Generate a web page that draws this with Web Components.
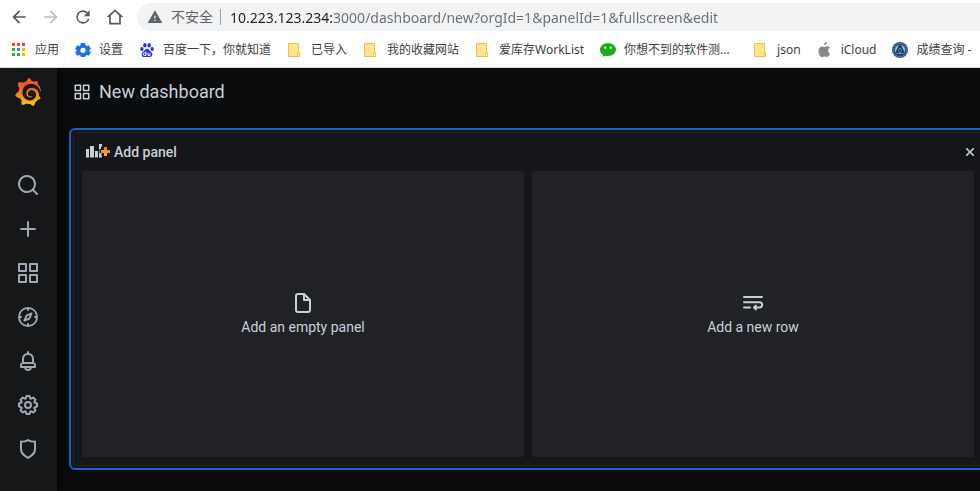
<!DOCTYPE html>
<html lang="zh-CN">
<head>
<meta charset="utf-8">
<title>New dashboard - Grafana</title>
<style>
html, body { height: 100%; }
body { margin: 0; overflow: hidden; background: #0b0c0e; }
</style>
</head>
<body>
<app-window></app-window>
<script>
const define = (name, html, setup) => {
  const template = document.createElement('template');
  template.innerHTML = html;
  customElements.define(name, class extends HTMLElement {
    constructor() {
      super();
      this.attachShadow({ mode: 'open' }).append(template.content.cloneNode(true));
    }
    connectedCallback() { if (setup) setup(this, this.shadowRoot); }
  });
};

/* Line icons on a 24-unit grid */
const icons = {
  search: 'M21.71,20.29,18,16.61A9,9,0,1,0,16.61,18l3.68,3.68a1,1,0,0,0,1.42,0A1,1,0,0,0,21.71,20.29ZM11,18a7,7,0,1,1,7-7A7,7,0,0,1,11,18Z',
  plus: 'M19,11H13V5a1,1,0,0,0-2,0v6H5a1,1,0,0,0,0,2h6v6a1,1,0,0,0,2,0V13h6a1,1,0,0,0,0-2Z',
  apps: 'M10,13H3a1,1,0,0,0-1,1v7a1,1,0,0,0,1,1h7a1,1,0,0,0,1-1V14A1,1,0,0,0,10,13ZM9,20H4V15H9ZM21,2H14a1,1,0,0,0-1,1v7a1,1,0,0,0,1,1h7a1,1,0,0,0,1-1V3A1,1,0,0,0,21,2ZM20,9H15V4h5Zm1,4H14a1,1,0,0,0-1,1v7a1,1,0,0,0,1,1h7a1,1,0,0,0,1-1V14A1,1,0,0,0,21,13Zm-1,7H15V15h5ZM10,2H3A1,1,0,0,0,2,3v7a1,1,0,0,0,1,1h7a1,1,0,0,0,1-1V3A1,1,0,0,0,10,2ZM9,9H4V4H9Z',
  compass: 'M12,2A10,10,0,1,0,22,12,10,10,0,0,0,12,2Zm1,17.93V19a1,1,0,0,0-2,0v.93A8,8,0,0,1,4.07,13H5a1,1,0,0,0,0-2H4.07A8,8,0,0,1,11,4.07V5a1,1,0,0,0,2,0V4.07A8,8,0,0,1,19.93,11H19a1,1,0,0,0,0,2h.93A8,8,0,0,1,13,19.93ZM15.14,7.55l-5,2.12a1,1,0,0,0-.52.52l-2.12,5a1,1,0,0,0,.21,1.1,1,1,0,0,0,.7.3.93.93,0,0,0,.4-.09l5-2.12a1,1,0,0,0,.52-.52l2.12-5a1,1,0,0,0-1.31-1.31Zm-2.49,5.1-2.28,1,1-2.28,2.28-1Z',
  bell: 'M18,13.18V10a6,6,0,0,0-5-5.91V3a1,1,0,0,0-2,0V4.09A6,6,0,0,0,6,10v3.18A3,3,0,0,0,4,16v2a1,1,0,0,0,1,1H8.14a4,4,0,0,0,7.72,0H19a1,1,0,0,0,1-1V16A3,3,0,0,0,18,13.18ZM8,10a4,4,0,0,1,8,0v3H8Zm4,10a2,2,0,0,1-1.72-1h3.44A2,2,0,0,1,12,20Zm6-3H6V16a1,1,0,0,1,1-1H17a1,1,0,0,1,1,1Z',
  cog: 'M21.32,9.55l-1.89-.63.89-1.78A1,1,0,0,0,20.13,6L18,3.87a1,1,0,0,0-1.15-.19l-1.78.89-.63-1.89A1,1,0,0,0,13.5,2h-3a1,1,0,0,0-.95.68L8.92,4.57,7.14,3.68A1,1,0,0,0,6,3.87L3.87,6a1,1,0,0,0-.19,1.15l.89,1.78-1.89.63A1,1,0,0,0,2,10.5v3a1,1,0,0,0,.68.95l1.89.63-.89,1.78A1,1,0,0,0,3.87,18L6,20.13a1,1,0,0,0,1.15.19l1.78-.89.63,1.89a1,1,0,0,0,.95.68h3a1,1,0,0,0,.95-.68l.63-1.89,1.78.89A1,1,0,0,0,18,20.13L20.13,18a1,1,0,0,0,.19-1.15l-.89-1.78,1.89-.63A1,1,0,0,0,22,13.5v-3A1,1,0,0,0,21.32,9.55ZM20,12.78l-1.2.4A2,2,0,0,0,17.64,16l.57,1.14-1.1,1.1L16,17.64a2,2,0,0,0-2.79,1.16l-.4,1.2H11.22l-.4-1.2A2,2,0,0,0,8,17.64l-1.14.57-1.1-1.1L6.36,16A2,2,0,0,0,5.2,13.18L4,12.78V11.22l1.2-.4A2,2,0,0,0,6.36,8L5.79,6.89l1.1-1.1L8,6.36A2,2,0,0,0,10.82,5.2l.4-1.2h1.56l.4,1.2A2,2,0,0,0,16,6.36l1.14-.57,1.1,1.1L17.64,8a2,2,0,0,0,1.16,2.79l1.2.4ZM12,8a4,4,0,1,0,4,4A4,4,0,0,0,12,8Zm0,6a2,2,0,1,1,2-2A2,2,0,0,1,12,14Z',
  shield: 'M19.63,3.65a1,1,0,0,0-.84-.2,8,8,0,0,1-6.22-1.27,1,1,0,0,0-1.14,0A8,8,0,0,1,5.21,3.45a1,1,0,0,0-.84.2A1,1,0,0,0,4,4.43v7.45a9,9,0,0,0,3.77,7.33l3.65,2.6a1,1,0,0,0,1.16,0l3.65-2.6A9,9,0,0,0,20,11.88V4.43A1,1,0,0,0,19.63,3.65ZM18,11.88a7,7,0,0,1-2.93,5.7L12,19.77,8.93,17.58A7,7,0,0,1,6,11.88V5.58a10,10,0,0,0,6-1.39,10,10,0,0,0,6,1.39Z',
  file: 'M20,8.94a1.31,1.31,0,0,0-.06-.27l0-.09a1.07,1.07,0,0,0-.19-.28h0l-6-6h0a1.07,1.07,0,0,0-.28-.19l-.1,0A1.1,1.1,0,0,0,13.06,2H7A3,3,0,0,0,4,5V19a3,3,0,0,0,3,3H17a3,3,0,0,0,3-3V9S20,9,20,8.94ZM14,5.41,16.59,8H14ZM18,19a1,1,0,0,1-1,1H7a1,1,0,0,1-1-1V5A1,1,0,0,1,7,4h5V9a1,1,0,0,0,1,1h5Z',
  wrap: 'M3,7H21a1,1,0,0,0,0-2H3A1,1,0,0,0,3,7ZM9,15.5H3a1,1,0,0,0,0,2H9a1,1,0,0,0,0-2ZM18.5,10.2H3a1,1,0,0,0,0,2H18.5a1.65,1.65,0,0,1,0,3.3H15.4l.3-.3a1,1,0,0,0-1.4-1.4l-2,2a1,1,0,0,0,0,1.4l2,2a1,1,0,0,0,1.4-1.4l-.3-.3h3.1a3.65,3.65,0,0,0,0-7.3Z',
  times: 'M13.9,12l4.8-4.8a1.35,1.35,0,0,0-1.9-1.9L12,10.1,7.2,5.3a1.35,1.35,0,0,0-1.9,1.9L10.1,12,5.3,16.8a1.35,1.35,0,0,0,1.9,1.9L12,13.9l4.8,4.8a1.35,1.35,0,0,0,1.9-1.9Z',
  back: 'M20 11H7.8l5.6-5.6L12 4l-8 8 8 8 1.4-1.4L7.8 13H20z',
  forward: 'M4 11h12.2l-5.6-5.6L12 4l8 8-8 8-1.4-1.4 5.6-5.6H4z',
  reload: 'M17.65 6.35A7.96 7.96 0 0 0 12 4a8 8 0 1 0 7.73 10h-2.08A6 6 0 1 1 12 6c1.66 0 3.14.69 4.22 1.78L13 11h7V4z',
  home: 'M12 2.6 2 12h3v9h14v-9h3zM12 5.4l5 4.7V19H7v-8.9z',
  warning: 'M1 21h22L12 2zm12-3h-2v-2h2zm0-4h-2v-4h2z'
};
define('ui-icon', `<style>
:host { display: block; flex: none; width: var(--size, 24px); height: var(--size, 24px); }
svg { display: block; width: 100%; height: 100%; fill: currentColor; }
</style><svg viewBox="0 0 24 24" aria-hidden="true"><path fill-rule="evenodd"/></svg>`,
(el, root) => root.querySelector('path').setAttribute('d', icons[el.getAttribute('name')]));

/* Bookmark favicons on a 16-unit grid */
const favicons = {
  apps: `<g><path fill="#ea4335" d="M1 1h3v3H1zM6 1h3v3H6zM11 1h3v3h-3z"/><path fill="#34a853" d="M1 6h3v3H1zM1 11h3v3H1z"/><path fill="#4285f4" d="M6 6h3v3H6z"/><path fill="#34a853" d="M6 11h3v3H6z"/><path fill="#fbbc05" d="M11 6h3v3h-3zM11 11h3v3h-3z"/></g>`,
  gear: `<path fill="#1a73e8" fill-rule="evenodd" d="M6 1h4l.6 2.200 1.100.7 2.200-.6 2 3.400L14.300 8.200v.6l1.600 1.500-2 3.400-2.200-.6-1.100.7L10 15H6l-.6-1.200-1.100-.7-2.200.6-2-3.400L1.700 8.800v-.6L.1 6.700l2-3.400 2.200.6 1.100-.7zM8 5.700a2.600 2.600 0 1 0 0 5.200 2.600 2.600 0 0 0 0-5.200z"/>`,
  paw: `<g fill="#2932e1"><ellipse cx="5.900" cy="3.300" rx="1.700" ry="2.300"/><ellipse cx="10.200" cy="3.300" rx="1.700" ry="2.300"/><ellipse cx="2.900" cy="7" rx="1.700" ry="2.100"/><ellipse cx="13.200" cy="7" rx="1.700" ry="2.100"/><path d="M8 6.700c-2 0-2.500 2-4 3.300-2.600 2.200-1.200 5 1.200 5h5.600c2.400 0 3.800-2.800 1.200-5C10.500 8.700 10 6.700 8 6.700z"/></g><path fill="none" stroke="#fff" d="M7 9.500v4H5.500a1.200 1.200 0 0 1 0-2.500H7M9 11v2.500h2V11"/>`,
  folder: `<path fill="#ffe48e" stroke="#e8c64d" d="M1.500 1.500h10v9.500h1v3.500h-11z"/><path fill="#fff0b8" stroke="#e8c64d" d="M10.500 14.500v-2.500l1-1 1 0v3.500z"/>`,
  chat: `<path fill="#1aad19" d="M8 1C3.500 1 0 4 0 7.700c0 2.200 1.200 4 3.100 5.200L2.500 15l2.700-1.300c.9.300 1.800.4 2.800.4 4.500 0 8-2.900 8-6.500S12.500 1 8 1z"/><g fill="#fff"><circle cx="5.300" cy="5.700" r="1.100"/><circle cx="10.700" cy="5.700" r="1.100"/></g>`,
  apple: `<path fill="#888" d="M9.800 0c.1 1.800-1.400 3.300-3 3.300C6.600 1.700 8.200.2 9.800 0zM13 11.800c-.7 1.600-1.700 3.300-3 3.300-1 0-1.300-.6-2.500-.6s-1.500.6-2.400.6C3.100 15.100 1.500 11.500 1.500 8.900c0-2.800 1.700-4.500 3.500-4.500 1.100 0 1.900.6 2.600.6s1.600-.7 2.900-.7c.8 0 1.800.4 2.400 1.400-2.400 1.400-2 4.900.1 6.100z"/>`,
  seal: `<circle cx="8" cy="8" r="8" fill="#285385"/><circle cx="8" cy="8" r="6.700" fill="none" stroke="#8fabc9" stroke-dasharray="1 1.200"/><circle cx="8" cy="8" r="5" fill="#a9c3dd"/><path fill="none" stroke="#173f73" stroke-width="1.700" d="M8 3 4.500 10M8 3l3.500 7M3.500 10.500h3L8 8l1.500 2.500h3M5 12.500h6"/>`
};
define('bookmark-link', `<style>
:host { display: block; flex: none; }
a { display: flex; align-items: center; gap: 8px; color: #3c4043; text-decoration: none; white-space: nowrap; line-height: 16px; }
svg { display: block; width: 16px; height: 16px; flex: none; }
:host([long]) span { min-width: 113px; }
</style><a href="#"><svg viewBox="0 0 16 16" aria-hidden="true"></svg><span><slot></slot></span></a>`,
(el, root) => { root.querySelector('svg').innerHTML = favicons[el.getAttribute('icon')]; });

define('bookmark-bar', `<style>
:host { display: flex; align-items: center; gap: 16px; height: 33px; padding: 0 11px 2px; overflow: hidden; box-sizing: border-box;
  font: 12px "Noto Sans", "Noto Sans CJK SC", sans-serif; }
</style>
<bookmark-link icon="apps">应用</bookmark-link>
<bookmark-link icon="gear">设置</bookmark-link>
<bookmark-link icon="paw">百度一下，你就知道</bookmark-link>
<bookmark-link icon="folder">已导入</bookmark-link>
<bookmark-link icon="folder">我的收藏网站</bookmark-link>
<bookmark-link icon="folder">爱库存WorkList</bookmark-link>
<bookmark-link icon="chat" long>你想不到的软件测...</bookmark-link>
<bookmark-link icon="folder">json</bookmark-link>
<bookmark-link icon="apple">iCloud</bookmark-link>
<bookmark-link icon="seal">成绩查询 -</bookmark-link>`);

define('address-bar', `<style>
:host { display: flex; align-items: center; flex: 1; height: 28px; margin-right: -16px; padding-left: 10px; box-sizing: border-box;
  border-radius: 14px; background: #f1f3f4; color: #5f6368; font: 14px "Noto Sans", "Noto Sans CJK SC", sans-serif; }
ui-icon { --size: 16px; }
label { margin-left: 8px; line-height: 20px; white-space: nowrap; }
i { width: 1px; height: 16px; margin: 0 9px 0 7px; background: #9aa0a6; }
input { flex: 1; min-width: 0; height: 24px; padding: 0; border: 0; outline: 0; font: inherit; color: #5f6368;
  background: linear-gradient(90deg, #202124 var(--host-width), #6a6e72 var(--host-width)); --host-width: 102px;
  -webkit-background-clip: text; background-clip: text; -webkit-text-fill-color: transparent; }
</style><ui-icon name="warning"></ui-icon><label for="url">不安全</label><i></i>
<input id="url" type="text" value="10.223.123.234:3000/dashboard/new?orgId=1&amp;panelId=1&amp;fullscreen&amp;edit">`);

define('browser-chrome', `<style>
:host { display: block; background: #fff; border-bottom: 1px solid #d5d7da; overflow: hidden; }
.bar { display: flex; align-items: center; height: 34px; padding-left: 9px; gap: 12px; }
button { display: block; flex: none; padding: 0; border: 0; background: none; color: #54585c; --size: 20px; }
button:disabled { color: #bbbdbf; }
</style>
<div class="bar">
<button aria-label="后退"><ui-icon name="back"></ui-icon></button>
<button aria-label="前进" disabled><ui-icon name="forward"></ui-icon></button>
<button aria-label="重新加载"><ui-icon name="reload"></ui-icon></button>
<button aria-label="主页"><ui-icon name="home"></ui-icon></button>
<address-bar></address-bar></div>
<bookmark-bar></bookmark-bar>`);

define('grafana-logo', `<style>
:host { display: block; width: 28px; height: 28px; }
svg { display: block; width: 100%; height: 100%; }
</style><svg viewBox="0 0 351 365" aria-hidden="true"><defs><linearGradient id="g" gradientUnits="userSpaceOnUse" x1="175" y1="445" x2="175" y2="114"><stop offset="0" stop-color="#fff100"/><stop offset="1" stop-color="#f05a28"/></linearGradient></defs>
<path fill="url(#g)" d="M342,161.2c-0.6-6.1-1.6-13.1-3.6-20.9c-2-7.7-5-16.2-9.4-25c-4.4-8.8-10.1-17.9-17.5-26.8c-2.9-3.5-6.1-6.9-9.5-10.2c5.1-20.3-6.2-37.9-6.2-37.9c-19.5-1.2-31.9,6.1-36.5,9.4c-0.8-0.3-1.5-0.7-2.3-1c-3.3-1.3-6.7-2.6-10.3-3.7c-3.5-1.1-7.1-2.1-10.8-3c-3.7-0.9-7.4-1.6-11.2-2.2c-0.7-0.1-1.3-0.2-2-0.3c-8.5-27.2-32.9-38.6-32.9-38.6c-27.3,17.3-32.4,41.5-32.4,41.5s-0.1,0.5-0.3,1.4c-1.5,0.4-3,0.9-4.5,1.3c-2.1,0.6-4.2,1.4-6.2,2.2c-2.1,0.8-4.1,1.6-6.2,2.5c-4.1,1.8-8.2,3.8-12.2,6c-3.9,2.2-7.7,4.6-11.4,7.1c-0.5-0.2-1-0.4-1-0.4c-37.8-14.4-71.3,2.9-71.3,2.9c-3.1,40.2,15.1,65.5,18.7,70.1c-0.9,2.5-1.7,5-2.5,7.5c-2.8,9.1-4.9,18.4-6.2,28.1c-0.2,1.4-0.4,2.8-0.5,4.2C18.8,192.7,8.5,228,8.5,228c29.1,33.5,63.1,35.6,63.1,35.6c0,0,0.1-0.1,0.1-0.1c4.3,7.7,9.3,15,14.9,21.9c2.4,2.9,4.8,5.6,7.4,8.3c-10.6,30.4,1.5,55.6,1.5,55.6c32.4,1.2,53.7-14.2,58.2-17.7c3.2,1.1,6.5,2.1,9.8,2.9c10,2.6,20.2,4.1,30.4,4.5c2.5,0.1,5.1,0.2,7.6,0.1l1.2,0l0.8,0l1.6,0l1.6-0.1l0,0.1c15.3,21.8,42.1,24.9,42.1,24.9c19.1-20.1,20.2-40.1,20.2-44.4l0,0c0,0,0-0.1,0-0.3c0-0.4,0-0.6,0-0.6l0,0c0-0.3,0-0.6,0-0.9c4-2.8,7.8-5.8,11.4-9.1c7.6-6.9,14.3-14.8,19.9-23.3c0.5-0.8,1-1.6,1.5-2.4c21.6,1.2,36.9-13.4,36.9-13.4c-3.6-22.5-16.4-33.5-19.1-35.6l0,0c0,0-0.1-0.1-0.3-0.2c-0.2-0.1-0.2-0.2-0.2-0.2c0,0,0,0,0,0c-0.1-0.1-0.3-0.2-0.5-0.3c0.1-1.4,0.2-2.7,0.3-4.1c0.2-2.4,0.2-4.9,0.2-7.3l0-1.8l0-0.9l0-0.5c0-0.6,0-0.4,0-0.6l-0.1-1.5l-0.1-2c0-0.7-0.1-1.3-0.2-1.9c-0.1-0.6-0.1-1.3-0.2-1.9l-0.2-1.9l-0.3-1.9c-0.4-2.5-0.8-4.9-1.4-7.4c-2.3-9.7-6.1-18.9-11-27.2c-5-8.3-11.2-15.6-18.3-21.8c-7-6.2-14.9-11.2-23.1-14.9c-8.3-3.7-16.9-6.1-25.5-7.2c-4.3-0.6-8.6-0.8-12.9-0.7l-1.6,0l-0.4,0c-0.1,0-0.6,0-0.5,0l-0.7,0l-1.6,0.1c-0.6,0-1.2,0.1-1.7,0.1c-2.2,0.2-4.4,0.5-6.5,0.9c-8.6,1.6-16.7,4.7-23.8,9c-7.1,4.3-13.3,9.6-18.3,15.6c-5,6-8.9,12.7-11.6,19.6c-2.7,6.9-4.2,14.1-4.6,21c-0.1,1.7-0.1,3.5-0.1,5.2c0,0.4,0,0.9,0,1.3l0.1,1.4c0.1,0.8,0.1,1.7,0.2,2.5c0.3,3.5,1,6.9,1.9,10.1c1.9,6.5,4.9,12.4,8.6,17.4c3.7,5,8.2,9.1,12.9,12.4c4.7,3.2,9.8,5.5,14.8,7c5,1.5,10,2.1,14.7,2.1c0.6,0,1.2,0,1.7,0c0.3,0,0.6,0,0.9,0c0.3,0,0.6,0,0.9-0.1c0.5,0,1-0.1,1.5-0.1c0.1,0,0.3,0,0.4-0.1l0.5-0.1c0.3,0,0.6-0.1,0.9-0.1c0.6-0.1,1.1-0.2,1.7-0.3c0.6-0.1,1.1-0.2,1.6-0.4c1.1-0.2,2.1-0.6,3.1-0.9c2-0.7,4-1.5,5.7-2.4c1.8-0.9,3.4-2,5-3c0.4-0.3,0.9-0.6,1.3-1c1.6-1.3,1.9-3.7,0.6-5.3c-1.1-1.4-3.1-1.8-4.7-0.9c-0.4,0.2-0.8,0.4-1.2,0.6c-1.4,0.7-2.8,1.3-4.3,1.8c-1.5,0.5-3.1,0.9-4.7,1.2c-0.8,0.1-1.6,0.2-2.5,0.3c-0.4,0-0.8,0.1-1.3,0.1c-0.4,0-0.9,0-1.2,0c-0.4,0-0.8,0-1.2,0c-0.5,0-1,0-1.5-0.1c0,0-0.3,0-0.1,0l-0.2,0l-0.3,0c-0.2,0-0.5,0-0.7-0.1c-0.5-0.1-0.9-0.1-1.4-0.2c-3.7-0.5-7.4-1.6-10.9-3.2c-3.6-1.6-7-3.8-10.1-6.6c-3.1-2.8-5.8-6.1-7.9-9.9c-2.1-3.8-3.6-8-4.3-12.4c-0.3-2.2-0.5-4.5-0.4-6.7c0-0.6,0.1-1.2,0.1-1.8c0,0.2,0-0.1,0-0.1l0-0.2l0-0.5c0-0.3,0.1-0.6,0.1-0.9c0.1-1.2,0.3-2.4,0.5-3.6c1.7-9.6,6.5-19,13.9-26.1c1.9-1.8,3.9-3.4,6-4.9c2.1-1.5,4.4-2.8,6.8-3.9c2.4-1.1,4.8-2,7.4-2.7c2.5-0.7,5.1-1.1,7.8-1.4c1.3-0.1,2.6-0.2,4-0.2c0.4,0,0.6,0,0.9,0l1.1,0l0.7,0c0.3,0,0,0,0.1,0l0.3,0l1.1,0.1c2.9,0.2,5.7,0.6,8.5,1.3c5.6,1.2,11.1,3.3,16.2,6.1c10.2,5.7,18.9,14.5,24.2,25.1c2.7,5.3,4.6,11,5.5,16.9c0.2,1.5,0.4,3,0.5,4.5l0.1,1.1l0.1,1.1c0,0.4,0,0.8,0,1.1c0,0.4,0,0.8,0,1.1l0,1l0,1.1c0,0.7-0.1,1.9-0.1,2.6c-0.1,1.6-0.3,3.3-0.5,4.9c-0.2,1.6-0.5,3.2-0.8,4.8c-0.3,1.6-0.7,3.2-1.1,4.7c-0.8,3.1-1.8,6.2-3,9.3c-2.4,6-5.6,11.8-9.4,17.1c-7.7,10.6-18.2,19.2-30.2,24.7c-6,2.7-12.3,4.7-18.8,5.7c-3.2,0.6-6.5,0.9-9.8,1l-0.6,0l-0.5,0l-1.1,0l-1.6,0l-0.8,0c0.4,0-0.1,0-0.1,0l-0.3,0c-1.8,0-3.5-0.1-5.3-0.3c-7-0.5-13.9-1.8-20.7-3.7c-6.7-1.9-13.2-4.6-19.4-7.8c-12.3-6.6-23.4-15.6-32-26.5c-4.3-5.4-8.1-11.3-11.2-17.4c-3.1-6.1-5.6-12.6-7.4-19.1c-1.8-6.6-2.9-13.3-3.4-20.1l-0.1-1.3l0-0.3l0-0.3l0-0.6l0-1.1l0-0.3l0-0.4l0-0.8l0-1.6l0-0.3c0,0,0,0.1,0-0.1l0-0.6c0-0.8,0-1.7,0-2.5c0.1-3.3,0.4-6.8,0.8-10.2c0.4-3.4,1-6.9,1.7-10.3c0.7-3.4,1.5-6.8,2.5-10.2c1.9-6.7,4.3-13.2,7.1-19.3c5.7-12.2,13.1-23.1,22-31.8c2.2-2.2,4.5-4.2,6.9-6.2c2.4-1.9,4.9-3.7,7.5-5.4c2.5-1.7,5.2-3.2,7.9-4.6c1.3-0.7,2.7-1.4,4.1-2c0.7-0.3,1.4-0.6,2.1-0.9c0.7-0.3,1.4-0.6,2.1-0.9c2.8-1.2,5.7-2.2,8.7-3.1c0.7-0.2,1.5-0.4,2.2-0.7c0.7-0.2,1.5-0.4,2.2-0.6c1.5-0.4,3-0.8,4.5-1.1c0.7-0.2,1.5-0.3,2.3-0.5c0.8-0.2,1.5-0.3,2.3-0.5c0.8-0.1,1.5-0.3,2.3-0.4l1.1-0.2l1.2-0.2c0.8-0.1,1.5-0.2,2.3-0.3c0.9-0.1,1.7-0.2,2.6-0.3c0.7-0.1,1.9-0.2,2.6-0.3c0.5-0.1,1.1-0.1,1.6-0.2l1.1-0.1l0.5-0.1l0.6,0c0.9-0.1,1.7-0.1,2.6-0.2l1.3-0.1c0,0,0.5,0,0.1,0l0.3,0l0.6,0c0.7,0,1.5-0.1,2.2-0.1c2.9-0.1,5.9-0.1,8.8,0c5.8,0.2,11.5,0.9,17,1.9c11.1,2.1,21.5,5.6,31,10.3c9.5,4.6,17.9,10.3,25.3,16.5c0.5,0.4,0.9,0.8,1.4,1.2c0.4,0.4,0.9,0.8,1.3,1.2c0.9,0.8,1.7,1.6,2.6,2.4c0.9,0.8,1.7,1.6,2.5,2.4c0.8,0.8,1.6,1.6,2.4,2.5c3.1,3.3,6,6.6,8.6,10c5.2,6.7,9.4,13.5,12.7,19.9c0.2,0.4,0.4,0.8,0.6,1.2c0.2,0.4,0.4,0.8,0.6,1.2c0.4,0.8,0.8,1.6,1.1,2.4c0.4,0.8,0.7,1.5,1.1,2.3c0.3,0.8,0.7,1.5,1,2.3c1.2,3,2.4,5.9,3.3,8.6c1.5,4.4,2.6,8.3,3.5,11.7c0.3,1.4,1.6,2.3,3,2.1c1.5-0.1,2.6-1.3,2.6-2.8C342.6,170.4,342.5,166.1,342,161.2z"/></svg>`);

define('side-menu', `<style>
:host { display: flex; flex-direction: column; align-items: center; flex: none; width: 57px; box-sizing: border-box; padding: 10px 2px 0 0;
  background: #161719; box-shadow: 2px 0 12px #000; color: #9fa7b3; z-index: 1; }
a { display: block; color: inherit; }
nav { display: grid; gap: 20px; margin: 67px 0 0 1px; }
</style>
<a href="#" aria-label="Home"><grafana-logo></grafana-logo></a>
<nav>
<a href="#" aria-label="Search"><ui-icon name="search"></ui-icon></a>
<a href="#" aria-label="Create"><ui-icon name="plus"></ui-icon></a>
<a href="#" aria-label="Dashboards"><ui-icon name="apps"></ui-icon></a>
<a href="#" aria-label="Explore"><ui-icon name="compass"></ui-icon></a>
<a href="#" aria-label="Alerting"><ui-icon name="bell"></ui-icon></a>
<a href="#" aria-label="Configuration"><ui-icon name="cog"></ui-icon></a>
<a href="#" aria-label="Server Admin"><ui-icon name="shield"></ui-icon></a>
</nav>`);

define('panel-choice', `<style>
:host { display: block; min-width: 0; }
button { display: flex; flex-direction: column; align-items: center; justify-content: center; width: 100%; height: 100%; padding: 0; border: 0;
  border-radius: 2px; background: #202226; color: #c7d0d9; font: 14px/21px Roboto, sans-serif; gap: 2px; }
</style><button><slot name="icon"></slot><span><slot></slot></span></button>`);

define('add-panel', `<style>
:host { display: flex; flex-direction: column; flex: 1; box-sizing: border-box; padding: 2px; border: 2px solid #1f60c4; border-radius: 6px; background: #141619; }
section { display: flex; flex-direction: column; flex: 1; border: 1px solid #202226; border-radius: 3px; }
header { display: flex; align-items: center; height: 38px; padding: 0 5px 0 12px; color: #c7d0d9; }
svg { width: 24px; height: 16px; margin-right: 4px; }
h2 { flex: 1; margin: 0; font: 500 14px/20px Roboto, sans-serif; }
button { padding: 0; border: 0; background: none; color: inherit; --size: 14px; }
.choices { display: grid; grid-template-columns: 1fr 1fr; gap: 8px; flex: 1; padding: 0 8px 8px; }
</style>
<section>
<header>
<svg viewBox="0 0 24 16" aria-hidden="true"><defs><linearGradient id="p" x1="0" y1="0" x2="0" y2="1"><stop offset="0" stop-color="#f2762b"/><stop offset="1" stop-color="#fbb41a"/></linearGradient></defs><path fill="#c7d0d9" d="M0 5h3v8.500H0zM4 2h4v11.500H4zM9 7h3v6.500H9zM13 0h3v2.500h-1v2.500h-1.500v4h2v3h.500v1.500h-3z"/><path fill="url(#p)" d="M18 3h3v3h3v3h-3v3h-3V9h-3V6h3z"/></svg>
<h2>Add panel</h2>
<button aria-label="Close"><ui-icon name="times"></ui-icon></button>
</header>
<div class="choices">
<panel-choice><ui-icon slot="icon" name="file"></ui-icon>Add an empty panel</panel-choice>
<panel-choice><ui-icon slot="icon" name="wrap"></ui-icon>Add a new row</panel-choice>
</div>
</section>`);

define('dashboard-page', `<style>
:host { display: flex; flex-direction: column; flex: 1; min-width: 0; overflow: hidden; background: #0b0c0e; }
header { display: flex; align-items: center; gap: 8px; height: 48px; padding: 0 16px; margin-bottom: 12px; color: #c7d0d9; --size: 18px; }
h1 { margin: 0; font: 400 18px/24px Roboto, sans-serif; }
add-panel { margin: 0 -7px 21px 12px; }
</style>
<header><ui-icon name="apps"></ui-icon><h1>New dashboard</h1></header>
<add-panel></add-panel>`);

define('app-window', `<style>
:host { display: flex; flex-direction: column; height: 100%; }
main { display: flex; flex: 1; min-height: 0; overflow: hidden; }
</style>
<browser-chrome></browser-chrome>
<main><side-menu></side-menu><dashboard-page></dashboard-page></main>`);
</script>
</body>
</html>
